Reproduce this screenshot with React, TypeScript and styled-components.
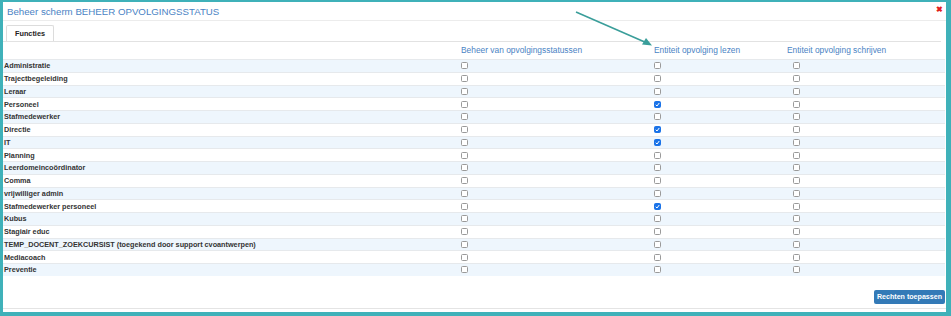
import styled, { createGlobalStyle } from "styled-components";

const GlobalStyle = createGlobalStyle`
  html, body {
    margin: 0;
    padding: 0;
    background: #fff;
  }
  body {
    font-family: "Liberation Sans", Arial, sans-serif;
  }
`;

const Frame = styled.div`
  position: relative;
  box-sizing: border-box;
  width: 951px;
  height: 316px;
  border-style: solid;
  border-color: #3fb1b9;
  border-width: 2px 5px 4px 3px;
  display: flex;
  flex-direction: column;
  background: #fff;
  overflow: hidden;
`;

const Header = styled.div`
  height: 18px;
  display: flex;
  align-items: center;
  justify-content: space-between;
  padding: 0 4px 0 4px;
  border-bottom: 1px solid #ececec;
`;

const Title = styled.div`
  font-size: 9.7px;
  color: #4a83c4;
`;

const Close = styled.span`
  color: #e02020;
  font-size: 8px;
  font-weight: bold;
  line-height: 1;
  margin-top: -3px;
  margin-right: -1px;
`;

const TabBar = styled.div`
  display: flex;
  padding: 4px 0 0 3px;
  margin-right: 5px;
  border-bottom: 1px solid #e2e2e2;
`;

const Tab = styled.div`
  height: 15px;
  padding: 0 8px;
  display: flex;
  align-items: center;
  font-size: 7.3px;
  font-weight: bold;
  color: #222;
  border: 1px solid #dcdcdc;
  border-bottom: none;
  border-radius: 2px 2px 0 0;
`;

const Table = styled.div`
  display: flex;
  flex-direction: column;
  margin-right: 1px;
`;

const Grid = styled.div<{ $alt?: boolean; $head?: boolean }>`
  display: grid;
  grid-template-columns: 455px 193px 133px 1fr;
  align-items: ${(p) => (p.$head ? "end" : "center")};
  height: ${(p) => (p.$head ? "17px" : "12.75px")};
  box-sizing: border-box;
  border-top: 1px solid ${(p) => (p.$head ? "transparent" : "#e6e9ec")};
  background: ${(p) => (p.$alt ? "#eef6fd" : "#fff")};
`;

const HeadCell = styled.div`
  font-size: 8.4px;
  color: #4a83c4;
  padding: 0 0 4px 3px;
  white-space: nowrap;
`;

const Label = styled.div`
  font-size: 7.25px;
  font-weight: bold;
  color: #333;
  padding-left: 1px;
  white-space: nowrap;
`;

const Cell = styled.div<{ $shift?: number }>`
  display: flex;
  align-items: center;
  padding-left: ${(p) => 3 + (p.$shift || 0)}px;
`;

const Box = styled.span<{ $on?: boolean }>`
  box-sizing: border-box;
  width: 7px;
  height: 7px;
  border-radius: 1.5px;
  border: 1px solid ${(p) => (p.$on ? "#1a73e8" : "#9a9a9a")};
  background: ${(p) => (p.$on ? "#1a73e8" : "#fff")};
  display: flex;
  align-items: center;
  justify-content: center;
`;

const Footer = styled.div`
  flex: 1;
  display: flex;
  justify-content: flex-end;
  align-items: flex-end;
  padding: 0 1px 4px 0;
  border-bottom: 1px solid #e4e4e4;
  margin-bottom: 3px;
`;

const Button = styled.button`
  height: 14px;
  padding: 0 3px;
  border: none;
  border-radius: 2px;
  background: #337ab7;
  color: #fff;
  font-family: "Liberation Sans", Arial, sans-serif;
  font-size: 7.1px;
  font-weight: bold;
`;

const Arrow = styled.svg`
  position: absolute;
  left: 0;
  top: 0;
  pointer-events: none;
`;

const rows: [string, boolean][] = [
  ["Administratie", false],
  ["Trajectbegeleiding", false],
  ["Leraar", false],
  ["Personeel", true],
  ["Stafmedewerker", false],
  ["Directie", true],
  ["IT", true],
  ["Planning", false],
  ["Leerdomeincoördinator", false],
  ["Comma", false],
  ["vrijwilliger admin", false],
  ["Stafmedewerker personeel", true],
  ["Kubus", false],
  ["Stagiair educ", false],
  ["TEMP_DOCENT_ZOEKCURSIST (toegekend door support cvoantwerpen)", false],
  ["Mediacoach", false],
  ["Preventie", false],
];

function Check({ on }: { on?: boolean }) {
  return (
    <Box $on={on}>
      {on && (
        <svg width="5" height="5" viewBox="0 0 10 10">
          <path d="M1.5 5.5 L4 8 L8.5 2" fill="none" stroke="#fff" strokeWidth="2" />
        </svg>
      )}
    </Box>
  );
}

function App() {
  return (
    <>
      <GlobalStyle />
      <Frame>
        <Header>
          <Title>Beheer scherm BEHEER OPVOLGINGSSTATUS</Title>
          <Close>✖</Close>
        </Header>
        <TabBar>
          <Tab>Functies</Tab>
        </TabBar>
        <Table>
          <Grid $head>
            <div />
            <HeadCell>Beheer van opvolgingsstatussen</HeadCell>
            <HeadCell>Entiteit opvolging lezen</HeadCell>
            <HeadCell>Entiteit opvolging schrijven</HeadCell>
          </Grid>
          {rows.map(([name, read], i) => (
            <Grid key={name} $alt={i % 2 === 0}>
              <Label>{name}</Label>
              <Cell>
                <Check />
              </Cell>
              <Cell>
                <Check on={read} />
              </Cell>
              <Cell $shift={6}>
                <Check />
              </Cell>
            </Grid>
          ))}
        </Table>
        <Footer>
          <Button>Rechten toepassen</Button>
        </Footer>
        <Arrow width="951" height="316">
          <line x1="573" y1="10" x2="644" y2="41" stroke="#3a9e9a" strokeWidth="1.6" />
          <polygon points="649,43.5 639,42.5 643,36" fill="#3a9e9a" />
        </Arrow>
      </Frame>
    </>
  );
}

export default App;
